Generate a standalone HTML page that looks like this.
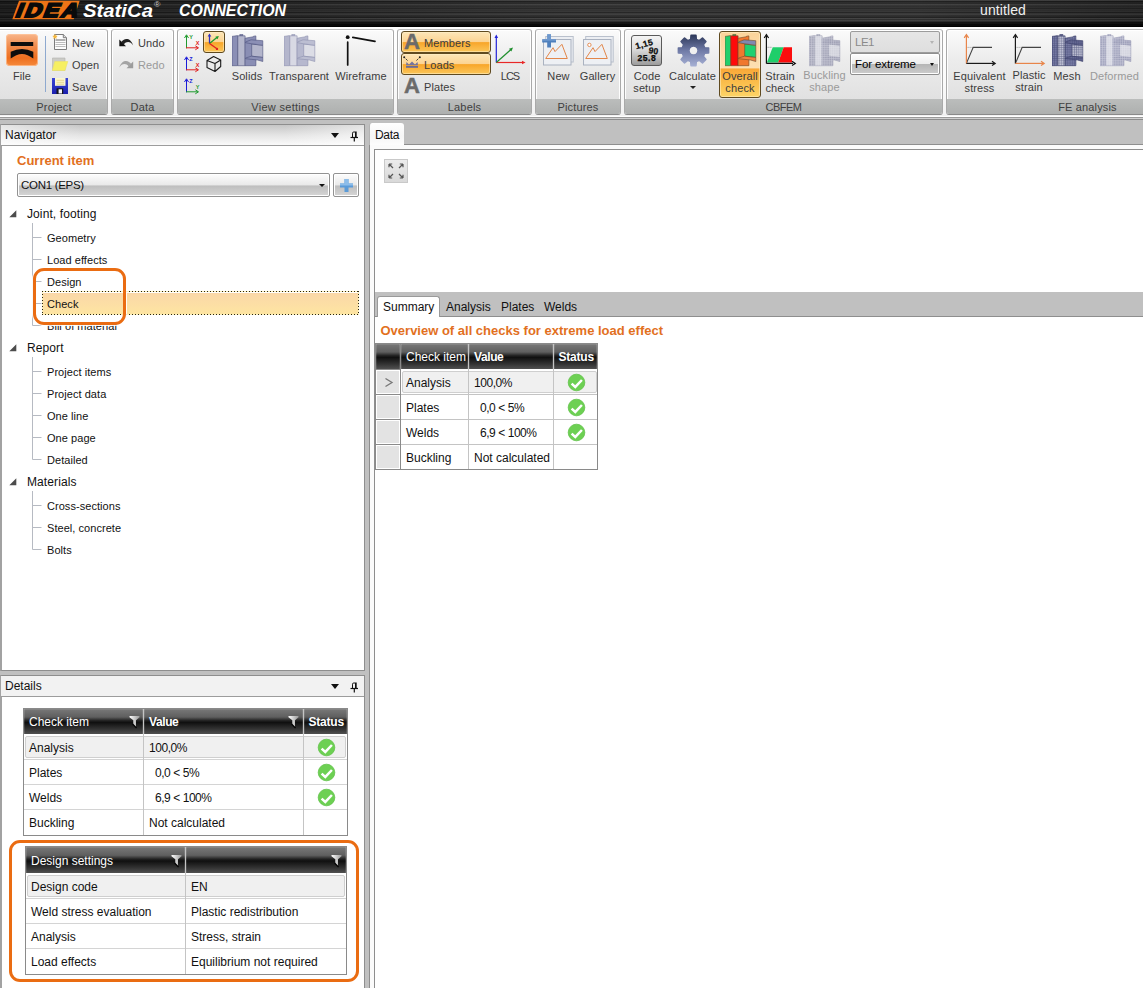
<!DOCTYPE html>
<html lang="en">
<head>
<meta charset="utf-8">
<title>IDEA StatiCa Connection</title>
<style>
*{box-sizing:border-box;margin:0;padding:0}
html,body{width:1143px;height:988px;overflow:hidden}
body{position:relative;background:#c0c0c0;font-family:"Liberation Sans","DejaVu Sans",sans-serif;font-size:12px;color:#1a1a1a}
.abs{position:absolute}
/* ---------- title bar ---------- */
#top{position:absolute;left:0;top:0;width:1143px;height:27px;background:linear-gradient(180deg,rgba(0,0,0,0) 0,rgba(0,0,0,0) 21px,rgba(0,0,0,.75) 24px,#000 27px),linear-gradient(90deg,rgba(0,0,0,.35) 0,rgba(0,0,0,.1) 20%,rgba(255,255,255,.04) 50%,rgba(255,255,255,.04) 80%,rgba(0,0,0,.1) 100%),repeating-linear-gradient(180deg,rgba(255,255,255,.05) 0,rgba(255,255,255,.05) 1px,rgba(0,0,0,.15) 1px,rgba(0,0,0,.15) 3px,rgba(255,255,255,.02) 3px,rgba(255,255,255,.02) 5px),repeating-linear-gradient(180deg,#343434 0,#343434 1px,#1d1d1d 1px,#1d1d1d 2px,#2b2b2b 2px,#2b2b2b 3px,#202020 3px,#202020 4px,#383838 4px,#383838 5px,#232323 5px,#232323 6px,#2e2e2e 6px,#2e2e2e 7px)}
#top .statica{position:absolute;left:83px;top:1px;font-size:17.500px;line-height:20px;font-weight:bold;font-style:italic;color:#fff;white-space:nowrap;transform-origin:0 0;transform:scaleX(1.160)}
#top .statica sup{font-size:7.500px;font-weight:normal;font-style:normal;position:relative;top:-1px;left:1px;vertical-align:top;color:#ccc;line-height:10px}
#top .conn{position:absolute;left:179px;top:1.700px;font-size:16px;line-height:17px;font-weight:bold;font-style:italic;color:#fff;white-space:nowrap;transform-origin:0 0;transform:scaleX(.995)}
#top .untitled{position:absolute;left:980px;top:2px;font-size:14px;letter-spacing:.1px;color:#f0f0f0;white-space:nowrap}
/* ---------- ribbon ---------- */
#ribbon{position:absolute;left:0;top:27px;width:1143px;height:90px;background:linear-gradient(#fff,#fbfbfb 60%,#f1f1f1)}
#ribline{position:absolute;left:0;top:116px;width:1143px;height:4px;background:linear-gradient(#fff 0,#fff 1px,#9a9a9a 1px,#9a9a9a 2px,#d0d0d0 2px,#d0d0d0 3px,#8c8c8c 3px,#8c8c8c 4px)}
.grp{position:absolute;top:29px;height:86px;border:1px solid #a6a6a6;border-color:#bdbdbd #a9a9a9 #8a8a8a #a9a9a9;border-radius:3px;background:linear-gradient(#fbfbfb 0,#ececec 30px,#e1e1e1 69px);box-shadow:inset 0 0 0 1px rgba(255,255,255,.9)}
.grp .lbl{position:absolute;left:0;right:0;bottom:0;height:15px;background:linear-gradient(#bbbdbc,#aeb0af);text-align:center;font-size:11px;line-height:16px;color:#404040;letter-spacing:.15px;border-radius:0 0 2px 2px;white-space:nowrap}
.t{position:absolute;white-space:nowrap;font-size:11px;line-height:14px;color:#3c3c3c;letter-spacing:.1px}
.tc{position:absolute;white-space:nowrap;font-size:11px;line-height:12px;color:#3c3c3c;text-align:center;transform:translateX(-50%);letter-spacing:.1px}
.t12{font-size:12px;letter-spacing:0;color:#111}
.dis{color:#9a9a9a}
.hot{position:absolute;border:1px solid #5f4a20;border-radius:3px;background:linear-gradient(#fde6b8 0,#fcd493 48%,#f8a62a 53%,#fbc65a 100%);box-shadow:inset 0 0 0 1px rgba(255,240,200,.55)}
/* ---------- panels ---------- */
.panel{position:absolute;background:#fff;border:1px solid #8e8e8e}
.phead{position:absolute;left:0;right:0;top:0;height:21px;background:linear-gradient(90deg,rgba(255,255,255,.55),rgba(255,255,255,0) 22%,rgba(255,255,255,0) 78%,rgba(255,255,255,.5)),linear-gradient(#c6c6c6,#e4e4e4 50%,#fafafa);border-bottom:1px solid #9c9c9c}
.phead span{position:absolute;left:4px;top:3px;font-size:12px;line-height:14px;color:#111}
.tree{position:absolute;white-space:nowrap;font-size:11px;line-height:14px;color:#111;letter-spacing:.05px}
.treep{position:absolute;white-space:nowrap;font-size:12px;line-height:14px;color:#111;letter-spacing:.1px}
/* ---------- tables ---------- */
.th{position:absolute;background:linear-gradient(#787878 0,#5f5f5f 32%,#202020 47%,#101010 54%,#303030 78%,#505050 100%);box-shadow:inset 1px 0 0 rgba(255,255,255,.12),inset -1px 0 0 rgba(255,255,255,.12),inset 0 1px 0 rgba(255,255,255,.1);color:#fff;font-size:12px;line-height:14px;white-space:nowrap;overflow:hidden}
.td{position:absolute;font-size:12px;line-height:14px;white-space:nowrap;color:#111}
</style>
</head>
<body>
<div id="top">
<svg class="abs" style="left:10px;top:0;overflow:visible" width="74" height="22" viewBox="0 0 74 22"><polygon points="9,0.800 69.700,0.800 63.700,19.300 2.300,19.300" fill="#ee7416"/><text x="0" y="0" transform="translate(4.600 17.400) scale(1.160 1) skewX(-19)" font-family="Liberation Sans,sans-serif" font-size="19.500" font-weight="bold" fill="#0a0a0a" stroke="#0a0a0a" stroke-width="2" stroke-linejoin="miter" letter-spacing="2.200">IDEA</text></svg>
<div class="statica">StatiCa<sup>®</sup></div>
<div class="conn">CONNECTION</div>
<div class="untitled">untitled</div>
</div>
<div id="ribbon"></div>
<div id="ribline"></div>
<!-- ===== Project group ===== -->
<div class="grp" style="left:-3px;width:111px"><div class="lbl" style="padding-left:3px">Project</div></div>
<div class="abs" style="left:6px;top:34px;width:32px;height:32px;border-radius:4px;background:linear-gradient(#f8b58a 0,#f08a4a 40%,#ee6f1f 75%,#f58a3c 100%);box-shadow:inset 0 0 0 1px rgba(255,200,160,.7)">
<svg width="32" height="32" viewBox="0 0 32 32"><rect x="4.700" y="8" width="22.500" height="4" fill="#0d0d0d"/><path d="M4.700 17.700Q16 12.400 27.300 17.700L27.300 24.600Q16 15.200 4.700 24.600Z" fill="#0d0d0d"/></svg></div>
<div class="tc" style="left:22px;top:70px">File</div>
<div class="abs" style="left:45px;top:36px;width:1px;height:56px;background:#8ea9cf"></div>
<svg class="abs" style="left:52px;top:33px" width="16" height="18" viewBox="0 0 16 18"><path d="M2.500 1.500h8.800l3.200 3.200v11.800h-12z" fill="#fdfdfd" stroke="#7c7c7c"/><path d="M11.300 1.500v3.200h3.200" fill="#dedede" stroke="#7c7c7c"/><rect x="3.500" y="6" width="10" height="2" fill="#b2b2b2"/><path d="M3.500 9.500h10M3.500 11.500h10M3.500 13.500h10" stroke="#bdbdbd" stroke-width="1"/><path d="M3 1l.8 1.600 1.800.3-1.300 1.300.3 1.800L3 5.100l-1.600.9.300-1.800L.4 2.900l1.800-.3z" fill="#f6b73c"/></svg>
<div class="t" style="left:72px;top:36px">New</div>
<svg class="abs" style="left:52px;top:57px" width="17" height="15" viewBox="0 0 17 15"><path d="M.5 1h12.500v12.500h-12.500z" fill="#cbcbc6" stroke="#b4b4ae" stroke-width=".6"/><path d="M2.800 4.500h13l-2.800 9h-12.700z" fill="#f6ef62" stroke="#ece36a" stroke-width=".6"/></svg>
<div class="t" style="left:72px;top:58px">Open</div>
<svg class="abs" style="left:52px;top:77.700px" width="16" height="16" viewBox="0 0 16 16"><defs><linearGradient id="svg1" x1="0" y1="0" x2="0" y2="1"><stop offset="0" stop-color="#3a46d4"/><stop offset="1" stop-color="#1a1fae"/></linearGradient></defs><path d="M0 0h16v16H0z" fill="url(#svg1)"/><rect x="3" y="0" width="10.500" height="7.800" fill="#faf6d2"/><path d="M4.500 2.300h7.500M4.500 4.300h7.500M4.500 6.200h7.500" stroke="#e4d48a" stroke-width=".9"/><rect x="4.500" y="10.300" width="6.700" height="5.700" fill="#15151f"/><rect x="6.600" y="11.300" width="3.400" height="4.200" fill="#f4f4fa"/></svg>
<div class="t" style="left:72px;top:80px">Save</div>
<!-- ===== Data group ===== -->
<div class="grp" style="left:111px;width:63px"><div class="lbl">Data</div></div>
<svg class="abs" style="left:118.500px;top:37.500px" width="15" height="9" viewBox="0 0 15 9"><path d="M.3 1.500V8.300H7Z" fill="#111"/><path d="M2 4.200C5 -.3 11.500 -1 14.200 7.500C11.500 3.300 7.500 3 4.800 6.500Z" fill="#222"/></svg>
<div class="t" style="left:138px;top:36px">Undo</div>
<svg class="abs" style="left:118.500px;top:59.500px" width="15" height="9" viewBox="0 0 15 9"><g transform="translate(14.500 0) scale(-1 1)"><path d="M.3 1.500V8.300H7Z" fill="#9c9c9c"/><path d="M2 4.200C5 -.3 11.500 -1 14.200 7.500C11.500 3.300 7.500 3 4.800 6.500Z" fill="#a4a4a4"/></g></svg>
<div class="t dis" style="left:138px;top:58px">Redo</div>
<!-- ===== View settings group ===== -->
<div class="grp" style="left:177px;width:217px"><div class="lbl" style="letter-spacing:.3px">View settings</div></div>
<div class="hot" style="left:203px;top:31px;width:22px;height:22px"></div>
<div class="tc" style="left:247px;top:70px">Solids</div>
<div class="tc" style="left:299px;top:70px">Transparent</div>
<div class="tc" style="left:361px;top:70px">Wireframe</div>
<!-- ===== Labels group ===== -->
<div class="grp" style="left:397px;width:135px"><div class="lbl">Labels</div></div>
<div class="hot" style="left:401px;top:31px;width:90px;height:22px"></div>
<div class="hot" style="left:401px;top:53px;width:90px;height:22px"></div>
<div class="t" style="left:404px;top:31px;font-size:22px;line-height:22px;font-weight:bold;color:#6b6b6b;letter-spacing:0;-webkit-text-stroke:.5px #6b6b6b">A</div>
<div class="t" style="left:404px;top:75px;font-size:22px;line-height:22px;font-weight:bold;color:#6b6b6b;letter-spacing:0;-webkit-text-stroke:.5px #6b6b6b">A</div>
<div class="t" style="left:424px;top:36px">Members</div>
<div class="t" style="left:424px;top:58px">Loads</div>
<div class="t" style="left:424px;top:80px">Plates</div>
<div class="tc" style="left:510px;top:70px;letter-spacing:-1px">LCS</div>
<!-- ===== Pictures group ===== -->
<div class="grp" style="left:535px;width:86px"><div class="lbl">Pictures</div></div>
<div class="tc" style="left:558.5px;top:70px">New</div>
<div class="tc" style="left:597.5px;top:70px">Gallery</div>
<!-- ===== CBFEM group ===== -->
<div class="grp" style="left:624px;width:319px"><div class="lbl" style="letter-spacing:-.5px">CBFEM</div></div>
<div class="hot" style="left:719px;top:31px;width:42px;height:67px;background:linear-gradient(#fbd49a 0,#fde0b2 55%,#f9a838 57%,#fbc04e 80%,#fdd468 100%)"></div>
<div class="tc" style="left:647px;top:70px">Code<br>setup</div>
<div class="tc" style="left:692.500px;top:70px">Calculate</div>
<div class="abs" style="left:690px;top:86px;border:3px solid transparent;border-top:3px solid #222;border-bottom:0;width:0;height:0"></div>
<div class="tc" style="left:740px;top:70px">Overall<br>check</div>
<div class="tc" style="left:780px;top:70px">Strain<br>check</div>
<div class="tc dis" style="left:824.5px;top:69px">Buckling<br>shape</div>
<div class="abs" style="left:850px;top:31px;width:90px;height:22px;border:1px solid #9c9c9c;border-radius:2px;background:linear-gradient(#e6e6e6,#dedede)"><span class="t" style="left:4px;top:3px;font-size:11.500px;color:#8a8a8a;letter-spacing:-.5px">LE1</span><span class="abs" style="right:5px;top:9px;border:2.500px solid transparent;border-top:3px solid #b4b4b4;border-bottom:0"></span></div>
<div class="abs" style="left:850px;top:53px;width:90px;height:22px;border:1px solid #8e8e8e;border-radius:2px;background:linear-gradient(#fcfcfc 0,#ededed 48%,#b6b6b6 52%,#cdcdcd 100%);box-shadow:inset 0 0 0 1px #fff"><span class="t" style="left:4px;top:3px;color:#000;font-size:11.500px;letter-spacing:-.1px">For extreme</span><span class="abs" style="right:5px;top:9px;border:2.500px solid transparent;border-top:3px solid #111;border-bottom:0"></span></div>
<!-- ===== FE analysis group ===== -->
<div class="grp" style="left:946px;width:283px"><div class="lbl">FE analysis</div></div>
<div class="tc" style="left:979.5px;top:70px">Equivalent<br>stress</div>
<div class="tc" style="left:1029px;top:69px">Plastic<br>strain</div>
<div class="tc" style="left:1067px;top:70px">Mesh</div>
<div class="tc dis" style="left:1114.5px;top:70px">Deformed</div>
<svg class="abs" style="left:184px;top:33.5px" width="18" height="17" viewBox="0 0 18 17"><path d="M2.500 14.300V1.500" stroke="#1f9a2e" stroke-width="1" fill="none"/><path d="M0.500 4L2.500 .8 4.500 4" stroke="#1f9a2e" stroke-width="1" fill="none"/><path d="M2 13.800H14" stroke="#e02020" stroke-width="1" fill="none"/><path d="M11.300 11.800L14.500 13.800 11.300 15.800" stroke="#e02020" stroke-width="1" fill="none"/><text x="5.200" y="4.800" font-family="Liberation Sans,sans-serif" font-size="5.500" font-weight="bold" fill="#1f9a2e">Y</text><text x="11.800" y="11" font-family="Liberation Sans,sans-serif" font-size="5.500" font-weight="bold" fill="#e02020">X</text></svg>
<svg class="abs" style="left:184px;top:55.5px" width="18" height="17" viewBox="0 0 18 17"><path d="M2.500 14.300V1.500" stroke="#1a1ad8" stroke-width="1" fill="none"/><path d="M0.500 4L2.500 .8 4.500 4" stroke="#1a1ad8" stroke-width="1" fill="none"/><path d="M2 13.800H14" stroke="#e02020" stroke-width="1" fill="none"/><path d="M11.300 11.800L14.500 13.800 11.300 15.800" stroke="#e02020" stroke-width="1" fill="none"/><text x="5.200" y="4.800" font-family="Liberation Sans,sans-serif" font-size="5.500" font-weight="bold" fill="#1a1ad8">Z</text><text x="11.800" y="11" font-family="Liberation Sans,sans-serif" font-size="5.500" font-weight="bold" fill="#e02020">X</text></svg>
<svg class="abs" style="left:184px;top:77.5px" width="18" height="17" viewBox="0 0 18 17"><path d="M2.500 14.300V1.500" stroke="#1a1ad8" stroke-width="1" fill="none"/><path d="M0.500 4L2.500 .8 4.500 4" stroke="#1a1ad8" stroke-width="1" fill="none"/><path d="M2 13.800H14" stroke="#1f9a2e" stroke-width="1" fill="none"/><path d="M11.300 11.800L14.500 13.800 11.300 15.800" stroke="#1f9a2e" stroke-width="1" fill="none"/><text x="5.200" y="4.800" font-family="Liberation Sans,sans-serif" font-size="5.500" font-weight="bold" fill="#1a1ad8">Z</text><text x="11.800" y="11" font-family="Liberation Sans,sans-serif" font-size="5.500" font-weight="bold" fill="#1f9a2e">Y</text></svg>
<svg class="abs" style="left:204px;top:32px" width="20" height="20" viewBox="0 0 20 20"><g stroke-width="1.300" fill="none"><path d="M5.500 11.400V3.500" stroke="#3030c0"/><path d="M5.500 11.400L13.500 5" stroke="#1f9a2e"/><path d="M5.500 11.400L12.600 16.600" stroke="#e02020"/></g><path d="M3.700 4.500L5.500 1.600 7.300 4.500z" fill="#3030c0"/><path d="M11.300 4.700L14.900 3.900 13.500 7.200z" fill="#1f9a2e"/><circle cx="13" cy="16.900" r="1.200" fill="#e02020"/></svg>
<svg class="abs" style="left:206px;top:55px" width="17" height="18" viewBox="0 0 17 18"><path d="M7.600 1.500L1 5.500V12.500L9 16.500 14.700 11.500V5L7.600 1.500M1 5.500L9 8.500 14.700 5M9 8.500V16.500" fill="none" stroke="#1a1a1a" stroke-width="1.100" stroke-linejoin="round"/></svg>
<svg class="abs" style="left:232px;top:34px;opacity:1" width="32" height="33" viewBox="0 0 32 33"><polygon points="7.8,0.4 10.8,0.2 10.8,2 7.8,2" fill="#8d91b6" stroke="#4e527e" stroke-width=".6" stroke-linejoin="round"/><polygon points="0,2.4 5.5,1.6 5.5,31.7 0,31.7" fill="#8b8fb5" stroke="#4e527e" stroke-width=".6" stroke-linejoin="round"/><polygon points="5.8,1.8 13.1,1.8 13.1,31.7 5.8,31.7" fill="#b5b7cc" stroke="#4e527e" stroke-width=".6" stroke-linejoin="round"/><polygon points="13.1,4.2 21.5,2.7 21.5,2.2 23.9,1.9 23.9,31.7 13.1,31.7" fill="#8a8eb4" stroke="#4e527e" stroke-width=".6" stroke-linejoin="round"/><polygon points="19.7,10 30.8,11.4 30.8,23.4 19.7,22.2" fill="#b3b5cb" stroke="#4e527e" stroke-width=".6" stroke-linejoin="round"/><polygon points="13.5,8.0 19.1,5.8 30.8,6.7 30.8,11.3 19.1,9.7 13.5,8.7" fill="#8b8fb5" stroke="#4e527e" stroke-width=".6" stroke-linejoin="round"/><polygon points="13.5,24.0 19.5,22.2 30.8,23.5 30.8,27.5 25.5,26 19.1,25.3 13.5,24.7" fill="#8b8fb5" stroke="#4e527e" stroke-width=".6" stroke-linejoin="round"/></svg>
<svg class="abs" style="left:284px;top:34px;opacity:1" width="32" height="33" viewBox="0 0 32 33"><polygon points="7.8,0.4 10.8,0.2 10.8,2 7.8,2" fill="#b9bbd0" stroke="#8d90ae" stroke-width=".6" stroke-linejoin="round"/><polygon points="0,2.4 5.5,1.6 5.5,31.7 0,31.7" fill="#b4b6cc" stroke="#8d90ae" stroke-width=".6" stroke-linejoin="round"/><polygon points="5.8,1.8 13.1,1.8 13.1,31.7 5.8,31.7" fill="#d8d9e4" stroke="#8d90ae" stroke-width=".6" stroke-linejoin="round"/><polygon points="13.1,4.2 21.5,2.7 21.5,2.2 23.9,1.9 23.9,31.7 13.1,31.7" fill="#b6b8ce" stroke="#8d90ae" stroke-width=".6" stroke-linejoin="round"/><polygon points="19.7,10 30.8,11.4 30.8,23.4 19.7,22.2" fill="#dcdde6" stroke="#8d90ae" stroke-width=".6" stroke-linejoin="round"/><polygon points="13.5,8.0 19.1,5.8 30.8,6.7 30.8,11.3 19.1,9.7 13.5,8.7" fill="#bcbed2" stroke="#8d90ae" stroke-width=".6" stroke-linejoin="round"/><polygon points="13.5,24.0 19.5,22.2 30.8,23.5 30.8,27.5 25.5,26 19.1,25.3 13.5,24.7" fill="#bcbed2" stroke="#8d90ae" stroke-width=".6" stroke-linejoin="round"/></svg>
<svg class="abs" style="left:344px;top:33px" width="34" height="34" viewBox="0 0 34 34"><circle cx="3.700" cy="4.200" r="1.900" fill="#111"/><path d="M3.700 9.200V32M8.800 4.400L31 8.400" stroke="#111" stroke-width="1.700" fill="none" stroke-linecap="round"/></svg>
<svg class="abs" style="left:403px;top:56px" width="18" height="13" viewBox="0 0 18 13"><path d="M1 1L5 5M17 1L13 5" stroke="#222" stroke-width="1" stroke-dasharray="1.500 1" fill="none"/><circle cx="1.200" cy="1.200" r="1" fill="#222"/><circle cx="16.800" cy="1.200" r="1" fill="#222"/><path d="M3 9.300L3.500 6 6 8.500 9 5.500 12 8.500 14.500 6 15 9.300z" fill="#74749e"/><rect x="3" y="10" width="12" height="1.800" fill="#6a6a98"/></svg>
<svg class="abs" style="left:492px;top:32px" width="36" height="36" viewBox="0 0 36 36"><g stroke-width="1.200" fill="none"><path d="M4.300 30.500V5" stroke="#2222d8"/><path d="M4.300 30.500H31" stroke="#e82828"/><path d="M4.300 30.500L19 17.500" stroke="#1f8f2e"/></g><path d="M2.500 6L4.300 2.500 6.100 6z" fill="#2222d8"/><path d="M30 28.700L33.600 30.500 30 32.300z" fill="#e82828"/><path d="M17 16.800L21 15.600 19.400 19.400z" fill="#1f8f2e"/></svg>
<svg class="abs" style="left:540.5px;top:33px" width="34" height="34" viewBox="0 0 34 34"><rect x="4.700" y="3.500" width="27.500" height="25.500" fill="#eceef2" stroke="#b9c0cc"/><rect x="2.500" y="6.500" width="27.500" height="25.500" fill="#eef0f4" stroke="#aab2c0"/><path d="M4.700 25.500L12 14.700 14 18.600 20.900 11.300 26.300 25.500z" fill="none" stroke="#e2864a" stroke-width="1"/><path d="M6.200 1.200h3.800v5h5v3.400h-5v5h-3.800v-5h-5v-3.400h5z" fill="#4f80bd"/><path d="M6.200 1.200h3.800v5h5v1.500h-13.800v-1.500h5z" fill="#7aa3d4" opacity=".7"/></svg>
<svg class="abs" style="left:580.5px;top:33px" width="34" height="34" viewBox="0 0 34 34"><rect x="4.700" y="3.500" width="27.500" height="25.500" fill="#eceef2" stroke="#b9c0cc"/><rect x="2.500" y="6.500" width="27.500" height="25.500" fill="#eef0f4" stroke="#aab2c0"/><path d="M4.700 25.500L12 14.700 14 18.600 20.900 11.300 26.300 25.500z" fill="none" stroke="#e2864a" stroke-width="1"/><circle cx="8.400" cy="11.900" r="1.700" fill="#fff" stroke="#e2864a" stroke-width=".9"/></svg>
<div class="abs" style="left:631px;top:35px;width:31px;height:31px;border:1px solid #5a5a5a;border-radius:3px;background:linear-gradient(#f4f4f4,#dcdcdc 45%,#9c9c9c)"></div><svg class="abs" style="left:631px;top:35px" width="31" height="31" viewBox="0 0 31 31"><g font-family="Liberation Sans,sans-serif" font-weight="bold" fill="#0a0a0a" stroke="#0a0a0a" stroke-width=".25"><text x="5.300" y="14.300" font-size="8.600" letter-spacing=".3" transform="rotate(-15 5.300 14.300)">1,15</text><text x="17.300" y="18" font-size="8.600" transform="rotate(9 17.300 18)">90</text><text x="6.600" y="25.800" font-size="8.600" letter-spacing=".45">25.8</text></g></svg>
<svg class="abs" style="left:676.5px;top:33.6px" width="33" height="33" viewBox="0 0 33 33"><defs><linearGradient id="gg" x1="0" y1="0" x2="0" y2="1"><stop offset="0" stop-color="#2f3a5c"/><stop offset=".5" stop-color="#6f7aa6"/><stop offset="1" stop-color="#a4aed2"/></linearGradient></defs><path d="M13.68 5.45 L14.06 1.40 L18.94 1.40 L19.32 5.45 L22.32 6.70 L25.46 4.10 L28.90 7.54 L26.30 10.68 L27.55 13.68 L31.60 14.06 L31.60 18.94 L27.55 19.32 L26.30 22.32 L28.90 25.46 L25.46 28.90 L22.32 26.30 L19.32 27.55 L18.94 31.60 L14.06 31.60 L13.68 27.55 L10.68 26.30 L7.54 28.90 L4.10 25.46 L6.70 22.32 L5.45 19.32 L1.40 18.94 L1.40 14.06 L5.45 13.68 L6.70 10.68 L4.10 7.54 L7.54 4.10 L10.68 6.70Z M16.50 11.90 a4.600 4.600 0 1 0 .01 0z" fill="url(#gg)" fill-rule="evenodd" stroke="url(#gg)" stroke-width="1.600" stroke-linejoin="round"/></svg>
<svg class="abs" style="left:725.3px;top:34px;opacity:1" width="32" height="33" viewBox="0 0 32 33"><polygon points="7.8,0.4 10.8,0.2 10.8,2 7.8,2" fill="#21c468" stroke="#6a4a28" stroke-width=".6" stroke-linejoin="round"/><polygon points="0,2.4 5.5,1.6 5.5,31.7 0,31.7" fill="#21cf6c" stroke="#6a4a28" stroke-width=".6" stroke-linejoin="round"/><polygon points="5.8,1.8 13.1,1.8 13.1,31.7 5.8,31.7" fill="#ff0a0a" stroke="#6a4a28" stroke-width=".6" stroke-linejoin="round"/><polygon points="13.1,4.2 21.5,2.7 21.5,2.2 23.9,1.9 23.9,31.7 13.1,31.7" fill="#f0782e" stroke="#6a4a28" stroke-width=".6" stroke-linejoin="round"/><polygon points="19.7,10 30.8,11.4 30.8,23.4 19.7,22.2" fill="#1fd070" stroke="#6a4a28" stroke-width=".6" stroke-linejoin="round"/><polygon points="13.5,8.0 19.1,5.8 30.8,6.7 30.8,11.3 19.1,9.7 13.5,8.7" fill="#8088b0" stroke="#6a4a28" stroke-width=".6" stroke-linejoin="round"/><polygon points="13.5,24.0 19.5,22.2 30.8,23.5 30.8,27.5 25.5,26 19.1,25.3 13.5,24.7" fill="#f08040" stroke="#6a4a28" stroke-width=".6" stroke-linejoin="round"/></svg>
<svg class="abs" style="left:763px;top:33px" width="34" height="34" viewBox="0 0 34 34"><polygon points="3.900,29.500 9.700,14.300 20.700,14.300 15.200,29.500" fill="#1fce6a"/><polygon points="20.700,14.300 29,14.300 29,29.500 15.200,29.500" fill="#fb0d0d"/><path d="M3.400 14.300H9" stroke="#888" stroke-dasharray="1 1" fill="none"/><path d="M3.400 30.400V3M3.400 30.400H30" stroke="#111" stroke-width="1.200" fill="none"/><path d="M1.200 5L3.400 1.600 5.600 5M29 28.200L32.300 30.400 29 32.600" stroke="#111" stroke-width="1.200" fill="none"/></svg>
<svg class="abs" style="left:809px;top:34px;opacity:1" width="32" height="33" viewBox="0 0 32 33"><defs><pattern id="mb" width="2.200" height="2.200" patternUnits="userSpaceOnUse"><path d="M0 .5H2.200M.5 0V2.200" stroke="#ececf2" stroke-width="0.5" fill="none"/></pattern><clipPath id="cb"><polygon points="7.8,0.4 10.8,0.2 10.8,2 7.8,2"/><polygon points="0,2.4 5.5,1.6 5.5,31.7 0,31.7"/><polygon points="5.8,1.8 13.1,1.8 13.1,31.7 5.8,31.7"/><polygon points="13.1,4.2 21.5,2.7 21.5,2.2 23.9,1.9 23.9,31.7 13.1,31.7"/><polygon points="19.7,10 30.8,11.4 30.8,23.4 19.7,22.2"/><polygon points="13.5,8.0 19.1,5.8 30.8,6.7 30.8,11.3 19.1,9.7 13.5,8.7"/><polygon points="13.5,24.0 19.5,22.2 30.8,23.5 30.8,27.5 25.5,26 19.1,25.3 13.5,24.7"/></clipPath></defs><polygon points="7.8,0.4 10.8,0.2 10.8,2 7.8,2" fill="#a8a9bb" stroke="#9b9cb0" stroke-width=".6" stroke-linejoin="round"/><polygon points="0,2.4 5.5,1.6 5.5,31.7 0,31.7" fill="#a2a3b6" stroke="#9b9cb0" stroke-width=".6" stroke-linejoin="round"/><polygon points="5.8,1.8 13.1,1.8 13.1,31.7 5.8,31.7" fill="#d4d5de" stroke="#9b9cb0" stroke-width=".6" stroke-linejoin="round"/><polygon points="13.1,4.2 21.5,2.7 21.5,2.2 23.9,1.9 23.9,31.7 13.1,31.7" fill="#a4a5b8" stroke="#9b9cb0" stroke-width=".6" stroke-linejoin="round"/><polygon points="19.7,10 30.8,11.4 30.8,23.4 19.7,22.2" fill="#d0d1da" stroke="#9b9cb0" stroke-width=".6" stroke-linejoin="round"/><polygon points="13.5,8.0 19.1,5.8 30.8,6.7 30.8,11.3 19.1,9.7 13.5,8.7" fill="#9c9db2" stroke="#9b9cb0" stroke-width=".6" stroke-linejoin="round"/><polygon points="13.5,24.0 19.5,22.2 30.8,23.5 30.8,27.5 25.5,26 19.1,25.3 13.5,24.7" fill="#9c9db2" stroke="#9b9cb0" stroke-width=".6" stroke-linejoin="round"/><rect x="0" y="0" width="32" height="32" fill="url(#mb)" clip-path="url(#cb)" opacity="0.6"/></svg>
<svg class="abs" style="left:963px;top:33px" width="34" height="34" viewBox="0 0 34 34"><path d="M3.400 14.400H10" stroke="#999" stroke-dasharray="1 1" fill="none"/><path d="M3.400 30.400L10.200 14.400H29" stroke="#444" stroke-width="1.100" fill="none"/><path d="M3.400 30.400V2.500" stroke="#e8854a" stroke-width="1.200" fill="none"/><path d="M1.200 4.800L3.400 1.600 5.600 4.800" stroke="#e8854a" stroke-width="1.200" fill="none"/><path d="M3.400 30.400H31" stroke="#1a1a1a" stroke-width="1.200" fill="none"/><path d="M29 28.200L32.200 30.400 29 32.600" stroke="#1a1a1a" stroke-width="1.200" fill="none"/></svg>
<svg class="abs" style="left:1012px;top:33px" width="34" height="34" viewBox="0 0 34 34"><path d="M3.400 14.400H10" stroke="#999" stroke-dasharray="1 1" fill="none"/><path d="M3.400 30.400L10.200 14.400H29" stroke="#444" stroke-width="1.100" fill="none"/><path d="M3.400 30.400V2.500" stroke="#1a1a1a" stroke-width="1.200" fill="none"/><path d="M1.200 4.800L3.400 1.600 5.600 4.800" stroke="#1a1a1a" stroke-width="1.200" fill="none"/><path d="M3.400 30.400H31" stroke="#e8854a" stroke-width="1.200" fill="none"/><path d="M29 28.200L32.200 30.400 29 32.600" stroke="#e8854a" stroke-width="1.200" fill="none"/></svg>
<svg class="abs" style="left:1052px;top:34px;opacity:1" width="32" height="33" viewBox="0 0 32 33"><defs><pattern id="mm" width="2.200" height="2.200" patternUnits="userSpaceOnUse"><path d="M0 .5H2.200M.5 0V2.200" stroke="#3d416c" stroke-width="0.5" fill="none"/></pattern><clipPath id="cm"><polygon points="7.8,0.4 10.8,0.2 10.8,2 7.8,2"/><polygon points="0,2.4 5.5,1.6 5.5,31.7 0,31.7"/><polygon points="5.8,1.8 13.1,1.8 13.1,31.7 5.8,31.7"/><polygon points="13.1,4.2 21.5,2.7 21.5,2.2 23.9,1.9 23.9,31.7 13.1,31.7"/><polygon points="19.7,10 30.8,11.4 30.8,23.4 19.7,22.2"/><polygon points="13.5,8.0 19.1,5.8 30.8,6.7 30.8,11.3 19.1,9.7 13.5,8.7"/><polygon points="13.5,24.0 19.5,22.2 30.8,23.5 30.8,27.5 25.5,26 19.1,25.3 13.5,24.7"/></clipPath></defs><polygon points="7.8,0.4 10.8,0.2 10.8,2 7.8,2" fill="#7e82aa" stroke="#3a3e6a" stroke-width=".6" stroke-linejoin="round"/><polygon points="0,2.4 5.5,1.6 5.5,31.7 0,31.7" fill="#7a7ea8" stroke="#3a3e6a" stroke-width=".6" stroke-linejoin="round"/><polygon points="5.8,1.8 13.1,1.8 13.1,31.7 5.8,31.7" fill="#c6c8da" stroke="#3a3e6a" stroke-width=".6" stroke-linejoin="round"/><polygon points="13.1,4.2 21.5,2.7 21.5,2.2 23.9,1.9 23.9,31.7 13.1,31.7" fill="#7c80a9" stroke="#3a3e6a" stroke-width=".6" stroke-linejoin="round"/><polygon points="19.7,10 30.8,11.4 30.8,23.4 19.7,22.2" fill="#c2c4d6" stroke="#3a3e6a" stroke-width=".6" stroke-linejoin="round"/><polygon points="13.5,8.0 19.1,5.8 30.8,6.7 30.8,11.3 19.1,9.7 13.5,8.7" fill="#666a94" stroke="#3a3e6a" stroke-width=".6" stroke-linejoin="round"/><polygon points="13.5,24.0 19.5,22.2 30.8,23.5 30.8,27.5 25.5,26 19.1,25.3 13.5,24.7" fill="#666a94" stroke="#3a3e6a" stroke-width=".6" stroke-linejoin="round"/><rect x="0" y="0" width="32" height="32" fill="url(#mm)" clip-path="url(#cm)" opacity="0.75"/></svg>
<svg class="abs" style="left:1100px;top:34px;opacity:1" width="32" height="33" viewBox="0 0 32 33"><defs><pattern id="md" width="2.200" height="2.200" patternUnits="userSpaceOnUse"><path d="M0 .5H2.200M.5 0V2.200" stroke="#eeeef5" stroke-width="0.5" fill="none"/></pattern><clipPath id="cd"><polygon points="7.8,0.4 10.8,0.2 10.8,2 7.8,2"/><polygon points="0,2.4 5.5,1.6 5.5,31.7 0,31.7"/><polygon points="5.8,1.8 13.1,1.8 13.1,31.7 5.8,31.7"/><polygon points="13.1,4.2 21.5,2.7 21.5,2.2 23.9,1.9 23.9,31.7 13.1,31.7"/><polygon points="19.7,10 30.8,11.4 30.8,23.4 19.7,22.2"/><polygon points="13.5,8.0 19.1,5.8 30.8,6.7 30.8,11.3 19.1,9.7 13.5,8.7"/><polygon points="13.5,24.0 19.5,22.2 30.8,23.5 30.8,27.5 25.5,26 19.1,25.3 13.5,24.7"/></clipPath></defs><polygon points="7.8,0.4 10.8,0.2 10.8,2 7.8,2" fill="#a6a8c0" stroke="#9496b2" stroke-width=".6" stroke-linejoin="round"/><polygon points="0,2.4 5.5,1.6 5.5,31.7 0,31.7" fill="#9fa1bb" stroke="#9496b2" stroke-width=".6" stroke-linejoin="round"/><polygon points="5.8,1.8 13.1,1.8 13.1,31.7 5.8,31.7" fill="#d6d7e2" stroke="#9496b2" stroke-width=".6" stroke-linejoin="round"/><polygon points="13.1,4.2 21.5,2.7 21.5,2.2 23.9,1.9 23.9,31.7 13.1,31.7" fill="#a2a4bd" stroke="#9496b2" stroke-width=".6" stroke-linejoin="round"/><polygon points="19.7,10 30.8,11.4 30.8,23.4 19.7,22.2" fill="#d2d3de" stroke="#9496b2" stroke-width=".6" stroke-linejoin="round"/><polygon points="13.5,8.0 19.1,5.8 30.8,6.7 30.8,11.3 19.1,9.7 13.5,8.7" fill="#999bb6" stroke="#9496b2" stroke-width=".6" stroke-linejoin="round"/><polygon points="13.5,24.0 19.5,22.2 30.8,23.5 30.8,27.5 25.5,26 19.1,25.3 13.5,24.7" fill="#999bb6" stroke="#9496b2" stroke-width=".6" stroke-linejoin="round"/><rect x="0" y="0" width="32" height="32" fill="url(#md)" clip-path="url(#cd)" opacity="0.6"/></svg>

<!-- ===== Navigator panel ===== -->
<div class="panel" style="left:0;top:124px;width:365px;height:547px;border-left:2px solid #a2a2a2">
<div class="phead" style="left:-1px"><span>Navigator</span>
<i class="abs" style="left:330px;top:8px;border:4px solid transparent;border-top:5px solid #111;border-bottom:0"></i>
<svg class="abs" style="left:349px;top:6px" width="9" height="11" viewBox="0 0 9 11"><path d="M2.500 6V2.200Q2.500 1 3.700 1H5" stroke="#111" fill="none"/><path d="M5 .5h1.700v5.500h-1.700z" fill="#111"/><path d="M.5 6.500h7.500" stroke="#111" stroke-width="1.200"/><path d="M4.300 6.500v4" stroke="#111" stroke-width="1.200"/></svg>
</div>
</div>
<div class="abs" style="left:17px;top:153px;font-size:13px;line-height:16px;font-weight:bold;color:#e2701e;white-space:nowrap">Current item</div>
<div class="abs" style="left:17px;top:173px;width:313px;height:24px;border:1px solid #929292;border-radius:2px;background:linear-gradient(#fdfdfd 0,#e9e9e9 50%,#bebebe 54%,#d6d6d6 100%);box-shadow:inset 0 0 0 1px #fff"><span class="t t12" style="left:3px;top:4px;font-size:11.500px;letter-spacing:-.3px">CON1 (EPS)</span><i class="abs" style="right:4px;top:10px;border:3px solid transparent;border-top:3px solid #111;border-bottom:0"></i></div>
<div class="abs" style="left:333px;top:173px;width:26px;height:24px;border:1px solid #929292;border-radius:2px;background:linear-gradient(#fdfdfd 0,#e9e9e9 50%,#bebebe 54%,#d6d6d6 100%);box-shadow:inset 0 0 0 1px #fff"><svg class="abs" style="left:6px;top:5px" width="13" height="13" viewBox="0 0 13 13"><path d="M4.500 0h4v4.500h4.500v4h-4.500v4.500h-4v-4.500h-4.500v-4h4.500z" fill="#5b9bd8"/><path d="M4.500 0h4v4.500h4.500v2h-13v-2h4.500z" fill="#8dbdea"/></svg></div>
<!-- tree lines -->
<svg class="abs" style="left:28px;top:223px" width="16" height="340" viewBox="0 0 16 340"><path d="M4.500 0v102.500M4.500 14.500h9M4.500 36.500h9M4.500 58.500h9M4.500 80.500h9M4.500 102.500h9M4.500 134v102.500M4.500 148.500h9M4.500 170.500h9M4.500 192.500h9M4.500 214.500h9M4.500 236.500h9M4.500 268v58.500M4.500 282.500h9M4.500 304.500h9M4.500 326.500h9" stroke="#b6bac2" fill="none"/></svg>
<!-- selected row -->
<div class="abs" style="left:42px;top:291px;width:317px;height:24px;background:repeating-linear-gradient(90deg,#2b2412 0,#2b2412 1px,rgba(0,0,0,0) 1px,rgba(0,0,0,0) 3px) 0 0/100% 1px no-repeat,repeating-linear-gradient(90deg,#2b2412 0,#2b2412 1px,rgba(0,0,0,0) 1px,rgba(0,0,0,0) 3px) 0 100%/100% 1px no-repeat,repeating-linear-gradient(180deg,#2b2412 0,#2b2412 1px,rgba(0,0,0,0) 1px,rgba(0,0,0,0) 3px) 0 0/1px 100% no-repeat,repeating-linear-gradient(180deg,#2b2412 0,#2b2412 1px,rgba(0,0,0,0) 1px,rgba(0,0,0,0) 3px) 100% 0/1px 100% no-repeat,#fdf1bc"><div class="abs" style="left:1px;top:1px;right:1px;bottom:1px;background:linear-gradient(#fff 0,#fff 1px,#fad7a8 1px,#fee5a2 100%)"></div></div>
<svg class="abs" style="left:9px;top:209px" width="9" height="9" viewBox="0 0 9 9"><path d="M7.300 1.200v7h-7z" fill="#4c4c4c"/></svg>
<div class="treep" style="left:27px;top:207px">Joint, footing</div>
<div class="tree" style="left:47px;top:231px">Geometry</div>
<div class="tree" style="left:47px;top:253px">Load effects</div>
<div class="tree" style="left:47px;top:275px">Design</div>
<div class="tree" style="left:47px;top:297px">Check</div>
<div class="tree" style="left:47px;top:319px">Bill of material</div>
<svg class="abs" style="left:9px;top:343px" width="9" height="9" viewBox="0 0 9 9"><path d="M7.300 1.200v7h-7z" fill="#4c4c4c"/></svg>
<div class="treep" style="left:27px;top:341px">Report</div>
<div class="tree" style="left:47px;top:365px">Project items</div>
<div class="tree" style="left:47px;top:387px">Project data</div>
<div class="tree" style="left:47px;top:409px">One line</div>
<div class="tree" style="left:47px;top:431px">One page</div>
<div class="tree" style="left:47px;top:453px">Detailed</div>
<svg class="abs" style="left:9px;top:477px" width="9" height="9" viewBox="0 0 9 9"><path d="M7.300 1.200v7h-7z" fill="#4c4c4c"/></svg>
<div class="treep" style="left:27px;top:475px">Materials</div>
<div class="tree" style="left:47px;top:499px">Cross-sections</div>
<div class="tree" style="left:47px;top:521px">Steel, concrete</div>
<div class="tree" style="left:47px;top:543px">Bolts</div>
<!-- annotation -->
<div class="abs" style="left:33px;top:268px;width:93px;height:56.500px;border:3px solid #ea6c12;border-radius:11px;box-shadow:0 0 0 1px rgba(255,255,255,.9)"></div>

<!-- ===== Details panel ===== -->
<div class="panel" style="left:0;top:675px;width:365px;height:320px;border-left:2px solid #a2a2a2">
<div class="phead" style="background:#f2f2f2;left:-1px"><span>Details</span>
<i class="abs" style="left:330px;top:8px;border:4px solid transparent;border-top:5px solid #111;border-bottom:0"></i>
<svg class="abs" style="left:349px;top:6px" width="9" height="11" viewBox="0 0 9 11"><path d="M2.500 6V2.200Q2.500 1 3.700 1H5" stroke="#111" fill="none"/><path d="M5 .5h1.700v5.500h-1.700z" fill="#111"/><path d="M.5 6.500h7.500" stroke="#111" stroke-width="1.200"/><path d="M4.300 6.500v4" stroke="#111" stroke-width="1.200"/></svg>
</div>
</div>
<!-- table 1 -->
<div class="abs" style="left:23px;top:708px;width:325px;height:128px;background:#fff;border:1px solid #8a8a8a"></div>
<div class="th" style="left:24px;top:709px;width:119px;height:25px"><span class="abs" style="left:5px;top:6px">Check item</span></div>
<div class="th" style="left:144px;top:709px;width:159px;height:25px"><span class="abs" style="left:5px;top:6px;font-weight:bold;letter-spacing:-.4px">Value</span></div>
<div class="th" style="left:304px;top:709px;width:43px;height:25px"><span class="abs" style="left:4.500px;top:6px;font-weight:bold;letter-spacing:-.2px">Status</span></div>
<div class="abs" style="left:25px;top:736px;width:321px;height:22px;background:#f0f0f0;border:1px solid #cfcfcf;border-radius:2px"></div>
<div class="abs" style="left:24px;top:759px;width:323px;height:1px;background:#d4d4d4"></div>
<div class="abs" style="left:24px;top:784px;width:323px;height:1px;background:#d4d4d4"></div>
<div class="abs" style="left:24px;top:809px;width:323px;height:1px;background:#d4d4d4"></div>
<div class="abs" style="left:143px;top:709px;width:1px;height:126px;background:#c4c4c4"></div>
<div class="abs" style="left:303px;top:709px;width:1px;height:126px;background:#c4c4c4"></div>
<div class="td" style="left:29px;top:741px">Analysis</div><div class="td" style="left:149px;top:741px;letter-spacing:-.45px">100,0%</div>
<div class="td" style="left:29px;top:766px">Plates</div><div class="td" style="left:155px;top:766px;letter-spacing:-.45px">0,0 &lt; 5%</div>
<div class="td" style="left:29px;top:791px">Welds</div><div class="td" style="left:155px;top:791px;letter-spacing:-.45px">6,9 &lt; 100%</div>
<div class="td" style="left:29px;top:816px">Buckling</div><div class="td" style="left:149px;top:816px">Not calculated</div>
<svg class="abs" style="left:316.8px;top:737.8px" width="19" height="19" viewBox="0 0 19 19"><circle cx="9.500" cy="9.500" r="8.300" fill="#6dd053" stroke="#5fc248" stroke-width=".8"/><path d="M4.600 10.600L8.300 13.900 14.900 7" fill="none" stroke="#fff" stroke-width="2.500"/></svg><svg class="abs" style="left:316.8px;top:762.8px" width="19" height="19" viewBox="0 0 19 19"><circle cx="9.500" cy="9.500" r="8.300" fill="#6dd053" stroke="#5fc248" stroke-width=".8"/><path d="M4.600 10.600L8.300 13.900 14.900 7" fill="none" stroke="#fff" stroke-width="2.500"/></svg><svg class="abs" style="left:316.8px;top:787.8px" width="19" height="19" viewBox="0 0 19 19"><circle cx="9.500" cy="9.500" r="8.300" fill="#6dd053" stroke="#5fc248" stroke-width=".8"/><path d="M4.600 10.600L8.300 13.900 14.900 7" fill="none" stroke="#fff" stroke-width="2.500"/></svg><svg class="abs" style="left:129.0px;top:716.0px" width="12" height="13" viewBox="0 0 12 13"><defs><linearGradient id="fg129" x1="0" y1="0" x2="1" y2="0"><stop offset="0" stop-color="#fff"/><stop offset="1" stop-color="#9a9a9a"/></linearGradient></defs><path d="M.5 0H10.500V1.200L7 4.300V11.500L4.300 8.600V4.300L.5 1.200z" fill="url(#fg129)"/><path d="M3.600 8L7.500 12" stroke="#000" stroke-width="1.100"/></svg><svg class="abs" style="left:288.0px;top:716.0px" width="12" height="13" viewBox="0 0 12 13"><defs><linearGradient id="fg288" x1="0" y1="0" x2="1" y2="0"><stop offset="0" stop-color="#fff"/><stop offset="1" stop-color="#9a9a9a"/></linearGradient></defs><path d="M.5 0H10.500V1.200L7 4.300V11.500L4.300 8.600V4.300L.5 1.200z" fill="url(#fg288)"/><path d="M3.600 8L7.500 12" stroke="#000" stroke-width="1.100"/></svg>
<!-- table 2 -->
<div class="abs" style="left:25px;top:846px;width:322px;height:129px;background:#fff;border:1px solid #8a8a8a"></div>
<div class="th" style="left:26px;top:847px;width:159px;height:26px"><span class="abs" style="left:5px;top:7px">Design settings</span></div>
<div class="th" style="left:186px;top:847px;width:160px;height:26px"></div>
<div class="abs" style="left:27px;top:875px;width:318px;height:22px;background:#f0f0f0;border:1px solid #cfcfcf;border-radius:2px"></div>
<div class="abs" style="left:26px;top:898px;width:320px;height:1px;background:#d4d4d4"></div>
<div class="abs" style="left:26px;top:923px;width:320px;height:1px;background:#d4d4d4"></div>
<div class="abs" style="left:26px;top:948px;width:320px;height:1px;background:#d4d4d4"></div>
<div class="abs" style="left:185px;top:847px;width:1px;height:127px;background:#c4c4c4"></div>
<div class="td" style="left:31px;top:880px">Design code</div><div class="td" style="left:191px;top:880px">EN</div>
<div class="td" style="left:31px;top:905px">Weld stress evaluation</div><div class="td" style="left:191px;top:905px">Plastic redistribution</div>
<div class="td" style="left:31px;top:930px">Analysis</div><div class="td" style="left:191px;top:930px">Stress, strain</div>
<div class="td" style="left:31px;top:955px">Load effects</div><div class="td" style="left:191px;top:955px">Equilibrium not required</div>
<svg class="abs" style="left:170.5px;top:855.0px" width="12" height="13" viewBox="0 0 12 13"><defs><linearGradient id="fg170" x1="0" y1="0" x2="1" y2="0"><stop offset="0" stop-color="#fff"/><stop offset="1" stop-color="#9a9a9a"/></linearGradient></defs><path d="M.5 0H10.500V1.200L7 4.300V11.500L4.300 8.600V4.300L.5 1.200z" fill="url(#fg170)"/><path d="M3.600 8L7.500 12" stroke="#000" stroke-width="1.100"/></svg><svg class="abs" style="left:330.5px;top:855.0px" width="12" height="13" viewBox="0 0 12 13"><defs><linearGradient id="fg330" x1="0" y1="0" x2="1" y2="0"><stop offset="0" stop-color="#fff"/><stop offset="1" stop-color="#9a9a9a"/></linearGradient></defs><path d="M.5 0H10.500V1.200L7 4.300V11.500L4.300 8.600V4.300L.5 1.200z" fill="url(#fg330)"/><path d="M3.600 8L7.500 12" stroke="#000" stroke-width="1.100"/></svg>
<div class="abs" style="left:9px;top:840px;width:350px;height:142px;border:3px solid #ea6c12;border-radius:11px"></div>

<!-- ===== Main area ===== -->
<div class="abs" style="left:369px;top:145px;width:780px;height:850px;background:#fbfbfb;border-left:1px solid #8e8e8e"></div>
<div class="abs" style="left:369px;top:123px;width:35px;height:22px;background:linear-gradient(#fff,#f6f6f6 60%,#fdfdfd);border-radius:3px 3px 0 0;border-left:1px solid #b4b4b4"><span class="t t12" style="left:5px;top:5px;letter-spacing:-.3px">Data</span></div>
<div class="abs" style="left:374px;top:149px;width:780px;height:850px;border:1px solid #8e8e8e;background:#fff"></div>
<div class="abs" style="left:384px;top:159px;width:24px;height:24px;border:1px solid #c9c9c9;background:linear-gradient(#ececec,#d9d9d9)">
<svg width="22" height="22" viewBox="0 0 22 22"><g stroke="#555" stroke-width="1.200" fill="#555"><path d="M4 4l4 4M4 4h3.200M4 4v3.200M18 4l-4 4M18 4h-3.200M18 4v3.200M4 18l4-4M4 18h3.200M4 18v-3.200M18 18l-4-4M18 18h-3.200M18 18v-3.200"/></g></svg></div>
<div class="abs" style="left:404px;top:144px;width:760px;height:1px;background:#8e8e8e"></div>
<!-- tab strip -->
<div class="abs" style="left:375px;top:292px;width:780px;height:25px;background:#c0c0c0;border-bottom:1px solid #8e8e8e"></div>
<div class="abs" style="left:377px;top:296px;width:63px;height:21px;background:#fff;border:1px solid #9a9a9a;border-bottom:0;border-radius:3px 3px 0 0"></div>
<div class="t t12" style="left:383px;top:300px">Summary</div>
<div class="t t12" style="left:446px;top:300px">Analysis</div>
<div class="t t12" style="left:501px;top:300px">Plates</div>
<div class="t t12" style="left:544px;top:300px">Welds</div>
<div class="abs" style="left:380.500px;top:323px;font-size:13px;line-height:16px;font-weight:bold;color:#e2701e;white-space:nowrap">Overview of all checks for extreme load effect</div>
<!-- summary table -->
<div class="abs" style="left:375px;top:343px;width:223px;height:127px;background:#fff;border:1px solid #8a8a8a"></div>
<div class="th" style="left:376px;top:344px;width:24px;height:25px"></div>
<div class="th" style="left:401px;top:344px;width:67px;height:25px"><span class="abs" style="left:5px;top:6px">Check item</span></div>
<div class="th" style="left:469px;top:344px;width:84px;height:25px"><span class="abs" style="left:5px;top:6px;font-weight:bold;letter-spacing:-.4px">Value</span></div>
<div class="th" style="left:554px;top:344px;width:43px;height:25px"><span class="abs" style="left:4.500px;top:6px;font-weight:bold;letter-spacing:-.2px">Status</span></div>
<div class="abs" style="left:376px;top:370px;width:24px;height:24px;background:#e3e3e3;box-shadow:inset 0 0 0 1px #fff"></div><div class="abs" style="left:376px;top:395px;width:24px;height:24px;background:#e3e3e3;box-shadow:inset 0 0 0 1px #fff"></div><div class="abs" style="left:376px;top:420px;width:24px;height:24px;background:#e3e3e3;box-shadow:inset 0 0 0 1px #fff"></div><div class="abs" style="left:376px;top:445px;width:24px;height:24px;background:#e3e3e3;box-shadow:inset 0 0 0 1px #fff"></div>
<div class="abs" style="left:401px;top:370px;width:196px;height:24px;background:#fff"><div class="abs" style="left:1px;top:1px;right:0;bottom:1px;background:#f0f0f0;border:1px solid #cfcfcf;border-radius:2px"></div></div>
<div class="abs" style="left:376px;top:394px;width:221px;height:1px;background:#c4c4c4"></div>
<div class="abs" style="left:376px;top:419px;width:221px;height:1px;background:#c4c4c4"></div>
<div class="abs" style="left:376px;top:444px;width:221px;height:1px;background:#c4c4c4"></div>
<div class="abs" style="left:400px;top:344px;width:1px;height:125px;background:#8a8a8a"></div><div class="abs" style="left:376px;top:369px;width:24px;height:1px;background:#8a8a8a"></div><div class="abs" style="left:376px;top:394px;width:24px;height:1px;background:#8a8a8a"></div><div class="abs" style="left:376px;top:419px;width:24px;height:1px;background:#8a8a8a"></div><div class="abs" style="left:376px;top:444px;width:24px;height:1px;background:#8a8a8a"></div>
<div class="abs" style="left:468px;top:344px;width:1px;height:125px;background:#c4c4c4"></div>
<div class="abs" style="left:553px;top:344px;width:1px;height:125px;background:#c4c4c4"></div>
<svg class="abs" style="left:384px;top:377px" width="10" height="11" viewBox="0 0 10 11"><path d="M1.500 1.500L8 5.500 1.500 9.500" fill="none" stroke="#777" stroke-width="1.300"/></svg>
<div class="td" style="left:406px;top:376px">Analysis</div><div class="td" style="left:474px;top:376px;letter-spacing:-.45px">100,0%</div>
<div class="td" style="left:406px;top:401px">Plates</div><div class="td" style="left:480px;top:401px;letter-spacing:-.45px">0,0 &lt; 5%</div>
<div class="td" style="left:406px;top:426px">Welds</div><div class="td" style="left:480px;top:426px;letter-spacing:-.45px">6,9 &lt; 100%</div>
<div class="td" style="left:406px;top:451px">Buckling</div><div class="td" style="left:474px;top:451px">Not calculated</div>
<svg class="abs" style="left:566.7px;top:372.9px" width="19" height="19" viewBox="0 0 19 19"><circle cx="9.500" cy="9.500" r="8.300" fill="#6dd053" stroke="#5fc248" stroke-width=".8"/><path d="M4.600 10.600L8.300 13.900 14.900 7" fill="none" stroke="#fff" stroke-width="2.500"/></svg><svg class="abs" style="left:566.7px;top:397.9px" width="19" height="19" viewBox="0 0 19 19"><circle cx="9.500" cy="9.500" r="8.300" fill="#6dd053" stroke="#5fc248" stroke-width=".8"/><path d="M4.600 10.600L8.300 13.900 14.900 7" fill="none" stroke="#fff" stroke-width="2.500"/></svg><svg class="abs" style="left:566.7px;top:422.9px" width="19" height="19" viewBox="0 0 19 19"><circle cx="9.500" cy="9.500" r="8.300" fill="#6dd053" stroke="#5fc248" stroke-width=".8"/><path d="M4.600 10.600L8.300 13.900 14.900 7" fill="none" stroke="#fff" stroke-width="2.500"/></svg>

</body>
</html>
